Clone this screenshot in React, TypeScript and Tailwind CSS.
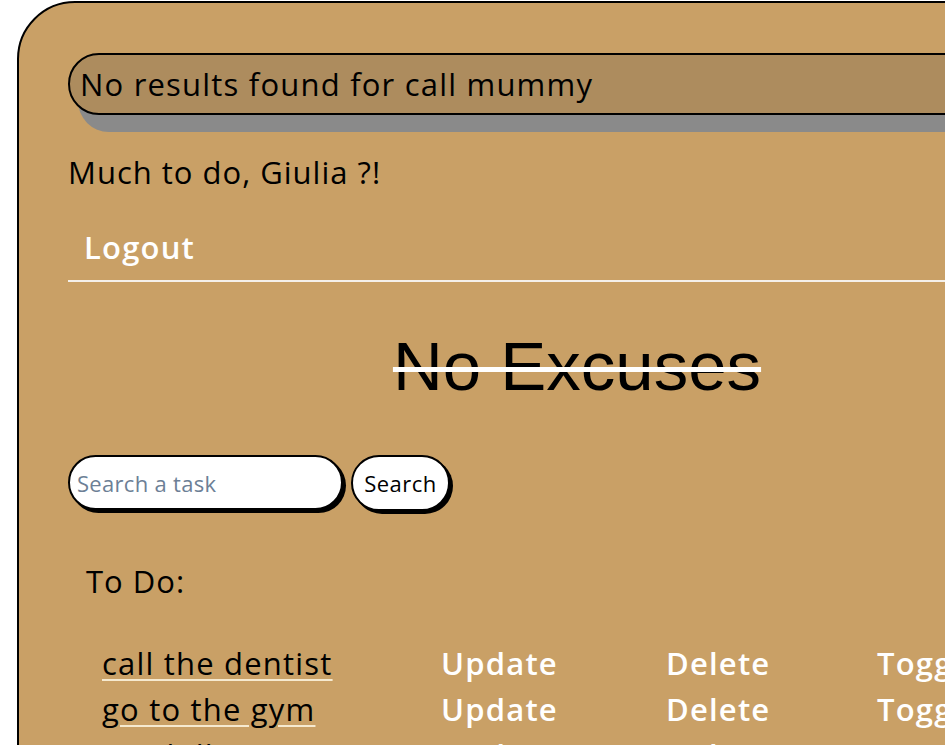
import React from 'react';

const tasks = ['call the dentist', 'go to the gym', 'pay bills'];

export default function App() {
  return (
    <div className="min-h-screen bg-white overflow-hidden font-['Open_Sans',sans-serif]">
      <div className="ml-[17px] mt-px w-[1120px] min-h-[800px] border-2 border-black rounded-t-[58px] bg-[#c9a066] pt-[50px] px-[49px]">
        <div className="h-[62px] border-2 border-black rounded-full bg-[#ad8c5e] shadow-[10px_17px_0_#8a8a8a] flex items-center pl-[10px] text-[31px] tracking-[1.2px] text-black">
          No results found for call mummy
        </div>

        <p className="mt-[39px] text-[31px] leading-[36px] tracking-[1px] text-black">Much to do, Giulia ?!</p>

        <nav className="mt-[39px] pl-4 pb-[15px] border-b-2 border-[#f4f0ea]">
          <a className="text-[31px] leading-[36px] tracking-[1.2px] font-semibold text-white">Logout</a>
        </nav>

        <h1 className="mt-[44px] text-center text-[69px] leading-[82px] font-['Liberation_Sans',Arial,sans-serif] text-black line-through decoration-white decoration-[5px]">
          No Excuses
        </h1>

        <form className="mt-[47px] flex gap-2" onSubmit={(e) => e.preventDefault()}>
          <input
            placeholder="Search a task"
            className="w-[275px] h-[55px] border-2 border-black rounded-full bg-white shadow-[3px_3px_0_#000] px-[7px] text-[22px] tracking-[0.3px] placeholder:text-[#6d7f96] outline-none"
          />
          <button className="w-[99px] h-[56px] border-2 border-black rounded-full bg-white shadow-[3px_3px_0_#000] text-[22px] tracking-[0.5px] text-black">
            Search
          </button>
        </form>

        <h2 className="mt-[52px] pl-[18px] text-[31px] leading-[36px] tracking-[1px] text-black">To Do:</h2>

        <ul className="mt-[41px] pl-[34px]">
          {tasks.map((t) => (
            <li key={t} className="flex h-[46px] items-center text-[31px] tracking-[1.2px]">
              <span className="w-[339px] text-black underline decoration-[#f6ead0] decoration-2 underline-offset-4">{t}</span>
              <span className="w-[225px] font-semibold text-white">Update</span>
              <span className="w-[211px] font-semibold text-white">Delete</span>
              <span className="font-semibold text-white">Toggle</span>
            </li>
          ))}
        </ul>
      </div>
    </div>
  );
}
